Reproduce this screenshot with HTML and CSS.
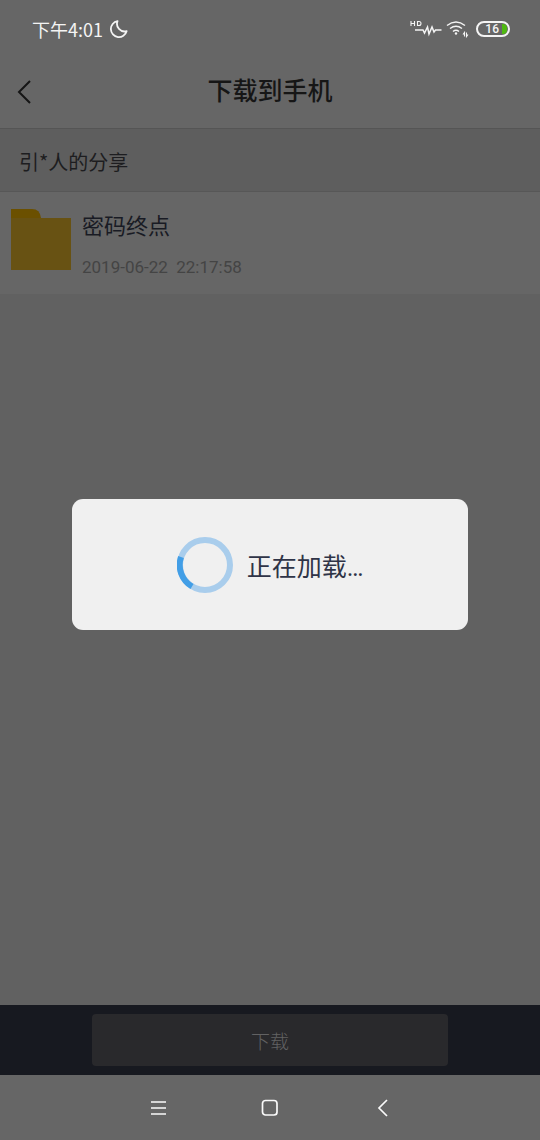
FILE: index.html
```html
<!DOCTYPE html>
<html lang="zh-CN">
<head>
    <meta charset="UTF-8">
    <meta name="viewport" content="width=device-width, initial-scale=1.0">
    <title>下载到手机</title>
    <link rel="stylesheet" href="styles.css">
</head>
<body>
    <div id="app">
        <div class="status">
            <span class="time">下午4:01</span>
            <svg class="moon" width="18" height="18" viewBox="0 0 18 18">
                <path d="M7.5 1.2 A8 8 0 1 0 16.600 11.200 A7.600 7.600 0 0 1 7.500 1.200 Z"/>
            </svg>
            <div class="signals">
                <svg width="34" height="20" viewBox="0 0 34 20">
                    <path class="hd" d="M3 2v5M6.500 2v5M3 4.500h3.500M9.500 2.500v4h1.500q2 0 2-2t-2-2z"/>
                    <path d="M7 11h8l1.500 3 3-6 1.500 7 3-7 2 5 1.500-2h6"/>
                </svg>
                <svg width="24" height="20" viewBox="0 0 24 20">
                    <path d="M1 6.500q9-7 18 0M4 9.500q6-4.500 12 0M7 12.500q3-2.500 6 0"/>
                    <circle cx="10" cy="14.500" r="1.200"/>
                    <path class="arrows" d="M18.500 17.500v-4l-1.500 2M20.500 13.500v4l1.500-2"/>
                </svg>
                <div class="battery"><span>16</span><i></i></div>
            </div>
        </div>
        <header class="header">
            <button class="back" aria-label="返回">
                <svg width="16" height="26" viewBox="0 0 16 26"><path d="M14 2 3 13 14 24"/></svg>
            </button>
            <h1>下载到手机</h1>
        </header>
        <div class="share">引*人的分享</div>
        <ul class="files">
            <li class="file">
                <svg width="60" height="62" viewBox="0 0 60 62">
                    <path fill="#6b5000" d="M0 0h21q8 0 9 9v8H0z"/>
                    <path fill="#685213" d="M0 9h60v52H0z"/>
                </svg>
                <div class="info">
                    <p class="name">密码终点</p>
                    <p class="date">2019-06-22&nbsp; 22:17:58</p>
                </div>
            </li>
        </ul>
        <div class="footer">
            <button class="download">下载</button>
        </div>
        <nav class="nav">
            <button aria-label="菜单">
                <svg width="18" height="18" viewBox="0 0 18 18"><path d="M2 3h15M2 9h15M2 15h15"/></svg>
            </button>
            <button aria-label="主页">
                <svg width="18" height="18" viewBox="0 0 18 18"><rect x="1.500" y="1.500" width="14.500" height="14.500" rx="3"/></svg>
            </button>
            <button aria-label="返回上一页">
                <svg width="18" height="18" viewBox="0 0 18 18"><path d="M14 1 6 9l8 8"/></svg>
            </button>
        </nav>
    </div>
    <div class="mask">
        <div class="loading" role="status">
            <svg width="56" height="56" viewBox="0 0 56 56">
                <circle cx="28" cy="28" r="25"/>
                <path d="M4 20A25 25 0 0 0 15 49.500"/>
            </svg>
            <span>正在加载…</span>
        </div>
    </div>
</body>
</html>
```
FILE: styles.css
```css
*{
    margin: 0;
    padding: 0;
    box-sizing: border-box;
}
body{
    background-color: #616161;
    font-family: "Noto Sans CJK SC", sans-serif;
}
li{
    list-style: none;
}
svg{
    display: block;
    flex: none;
    fill: none;
}
button{
    border: none;
    background: none;
    font-family: inherit;
    cursor: pointer;
}
#app{
    min-height: 100vh;
    display: flex;
    flex-direction: column;
}
/* 状态栏 */
.status{
    height: 56px;
    padding: 2px 30px 0 32px;
    display: flex;
    align-items: center;
    gap: 7px;
    background-color: #666;
    color: #f4f4f4;
}
.status svg{
    stroke: #f4f4f4;
    stroke-width: 1.5;
}
.status .moon{
    stroke-width: 1.8;
    stroke-linejoin: round;
}
.status circle{
    fill: #f4f4f4;
    stroke: none;
}
.status .hd,.status .arrows{
    stroke-width: 1.1;
}
.time{
    font-size: 18px;
}
.signals{
    margin-left: auto;
    display: flex;
    align-items: center;
    gap: 4px;
}
.battery{
    width: 34px;
    height: 16px;
    margin-left: 2px;
    border: 2px solid #f4f4f4;
    border-radius: 8px;
    overflow: hidden;
    display: flex;
    align-items: center;
    justify-content: flex-end;
    gap: 3px;
    font: 500 12px/12px Roboto, sans-serif;
}
.battery i{
    width: 5px;
    height: 10px;
    margin-right: 1px;
    border-radius: 0 4px 4px 0;
    background-color: #4fb911;
}
/* 标题栏 */
.header{
    height: 72px;
    padding: 0 16px;
    display: grid;
    grid-template-columns: 48px 1fr 48px;
    align-items: center;
    background-color: #666;
}
.back{
    width: 48px;
    height: 48px;
    display: flex;
    align-items: center;
}
.back svg{
    stroke: #151515;
    stroke-width: 2;
}
.header h1{
    font-size: 25px;
    line-height: 36px;
    padding-bottom: 6px;
    font-weight: 500;
    text-align: center;
    color: #161616;
}
.share{
    height: 64px;
    padding: 2px 19px 0;
    border-top: 1px solid #555;
    border-bottom: 1px solid #575757;
    background-color: #5e5e5e;
    color: #1d1d20;
    font-size: 20px;
    line-height: 62px;
}
.files{
    flex: 1;
}
.file{
    height: 102px;
    padding: 17px 11px;
    display: flex;
    gap: 11px;
    background-color: #666;
}
.name{
    font-size: 22px;
    line-height: 30px;
    color: #191b24;
}
.date{
    margin-top: 16px;
    font-family: Roboto, sans-serif;
    font-size: 17px;
    line-height: 24px;
    color: #444;
}
.footer{
    height: 70px;
    padding: 9px 17%;
    display: flex;
    background-color: #171920;
}
.download{
    flex: 1;
    border-radius: 4px;
    background-color: #29292c;
    color: #626263;
    font-size: 19px;
    font-weight: 300;
}
/* 系统导航 */
.nav{
    height: 65px;
    display: flex;
    align-items: center;
    justify-content: center;
    gap: 64px;
    background-color: #666;
}
.nav button{
    width: 48px;
    height: 48px;
    display: flex;
    align-items: center;
    justify-content: center;
}
.nav svg{
    stroke: #fafafa;
    stroke-width: 1.7;
}
/* 加载提示 */
.mask{
    position: fixed;
    inset: 0;
    padding: 0 72px 11px;
    display: flex;
    align-items: center;
}
.loading{
    flex: 1;
    height: 131px;
    display: flex;
    align-items: center;
    justify-content: center;
    gap: 14px;
    border-radius: 11px;
    background-color: #f0f0f0;
    color: #2f3447;
    font-family: Roboto, "Noto Sans CJK SC", sans-serif;
    font-size: 25px;
}
.loading circle{
    stroke: #a9cdec;
    stroke-width: 6;
}
.loading path{
    stroke: #429ee6;
    stroke-width: 6;
}
```
